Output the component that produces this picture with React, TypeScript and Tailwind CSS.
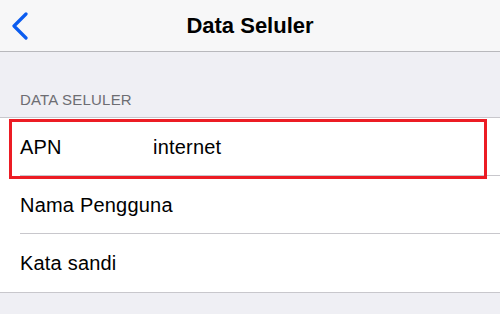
import React from 'react';

const rows = [
  { label: 'APN', value: 'internet', highlight: true },
  { label: 'Nama Pengguna', value: '' },
  { label: 'Kata sandi', value: '' },
];

export default function App() {
  return (
    <div
      className="w-[500px] h-[314px] overflow-hidden bg-[#efeff4]"
      style={{ fontFamily: '"Liberation Sans", Arial, sans-serif' }}
    >
      {/* Nav bar */}
      <div className="h-[52px] bg-[#f7f7f8] border-b border-[#b8b8bc] grid grid-cols-[1fr_auto_1fr] items-center">
        <div className="pl-[11px] flex items-center">
          <svg width="18" height="28" viewBox="0 0 18 28" fill="none">
            <path
              d="M15 2 L3 14 L15 26"
              stroke="#0b5cf0"
              strokeWidth="3.2"
              strokeLinecap="round"
              strokeLinejoin="round"
            />
          </svg>
        </div>
        <div className="text-[22px] font-bold text-black leading-none">Data Seluler</div>
        <div />
      </div>

      {/* Section header */}
      <div className="pt-[39px] pb-[8px] pl-5 text-[15px] leading-[18px] text-[#6d6d72] tracking-[0.2px]">
        DATA SELULER
      </div>

      {/* Cells */}
      <div className="bg-white border-t border-b border-[#c8c7cc]">
        {rows.map((row, i) => (
          <div key={i} className="relative pl-5">
            <div
              className={
                'h-[58px] flex items-center text-[20px] text-black whitespace-nowrap tracking-[0.2px] ' +
                (i < rows.length - 1 ? 'border-b border-[#c8c7cc]' : '')
              }
            >
              <span className="w-[133px] shrink-0">{row.label}</span>
              {row.value && <span>{row.value}</span>}
            </div>
            {row.highlight && (
              <div className="absolute left-[9px] top-[1px] w-[478px] h-[60px] border-[3px] border-[#ec1c24]" />
            )}
          </div>
        ))}
      </div>
    </div>
  );
}
